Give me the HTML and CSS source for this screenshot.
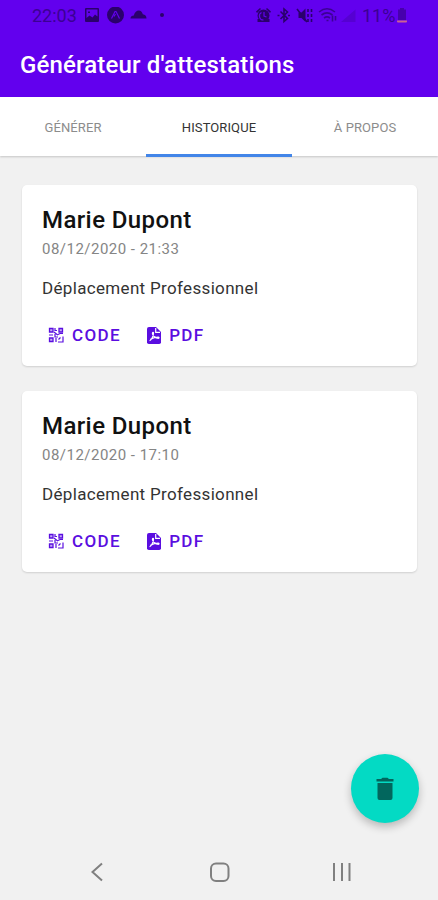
FILE: index.html
```html
<!DOCTYPE html>
<html lang="fr">
<head>
  <meta charset="UTF-8" />
  <meta name="viewport" content="width=device-width, initial-scale=1.0"/>
  <title>Générateur d'attestations</title>
  <link rel="stylesheet" href="styles.css">
</head>
<body>

<!-- Icônes partagées par les cartes -->
<svg class="sprite" width="0" height="0">
  <symbol id="icon-code" viewBox="0 0 16 16">
    <g fill="none" stroke="currentColor" stroke-width="1.3">
      <path fill="currentColor" fill-opacity="0.35" d="M1.500 1.500h3.500v3.500h-3.500zM11 1.500h3.500v3.500h-3.500zM1.500 11h3.500v3.500h-3.500z"/>
      <path stroke-width="1.2" d="M7 1v2.500h2M6 5l3 2.500M1 8h4M7 7v3h3M9 8l3-1.500h3M8 11v4M10 15h5V9.500M10.500 12.500l2-2"/>
    </g>
  </symbol>
  <symbol id="icon-pdf" viewBox="0 0 14 17">
    <path fill="currentColor" d="M2 0h7l5 5v10.2a1.8 1.8 0 0 1-1.8 1.8H1.8A1.8 1.8 0 0 1 0 15.2V2a2 2 0 0 1 2-2z"/>
    <path fill="none" stroke="#fff" stroke-width="1.2" d="M8.7 1v4.300H13M2.600 13.600c2-1 4-5 3.900-7.600 0-1-1.100-1-1.100.2 0 2.600 3.200 5.100 6 5.100 1 0 .8-1.100-.3-1.100-2.600 0-5.500 1-8 2.400"/>
  </symbol>
</svg>

<header class="app-bar">
  <div class="status-bar">
    <span class="clock">22:03</span>
    <svg class="status-left" width="82" height="18" viewBox="0 0 82 18">
      <path fill-rule="evenodd" d="M2 1h12a1 1 0 0 1 1 1v12a1 1 0 0 1-1 1H2a1 1 0 0 1-1-1V2a1 1 0 0 1 1-1zm.5 1.500v8.500L5.500 8.500l3 2L11 7.500l2.500 2v-7zM4 4.500h2v1.500H4z"/>
      <circle cx="31.500" cy="8" r="8.500"/>
      <path class="cut" d="M27.500 11.500l3.500-7h1l3.500 7M30 9.500l1.500-2.500"/>
      <path d="M46.500 11.500c0-2 1.500-3 3.300-3 .8-3.500 3-5 5-5s3.400 1.500 4 3.800c2.300.2 3.700 1.700 3.700 4.200z"/>
      <circle cx="78" cy="8" r="2"/>
    </svg>
    <svg class="status-right" width="102" height="18" viewBox="0 0 102 18">
      <path d="M0 4.500l4-3.500 1 1L1 6zM10 2l1-1 4 3.500L14 6z"/>
      <circle cx="7.500" cy="8.500" r="6"/>
      <path d="M1.500 12h12v3h-12z"/>
      <path class="cut" d="M8 5v4l2.500 1M5.500 5.500a4 4 0 0 0 2 7.500"/>
      <path class="line" d="M24.500 4.500l7 7-3.500 3V2l3.500 3-7 7M21.500 8.500h2M32 8.500h2"/>
      <path d="M42.500 5.500h3l4-4v13.500l-4-4h-3z"/>
      <path class="line" d="M41 2l10 13M52 2v3M52 7v3M52 12v3M55.500 2v3M55.500 7v3M55.500 12v3"/>
      <path class="thin" d="M63 5c5-4 11-4 16 0M65.500 8c4-3 7-3 11 0M68 11c2-1.500 4-1.500 6 0M70.500 13.500h2"/>
      <path class="thin" d="M76.500 8.500v6M79.500 13.500V9"/>
      <path class="faint" d="M85 15L99.500 2.500V15z"/>
    </svg>
    <span class="percent">11%</span>
    <svg class="battery" width="10" height="16" viewBox="0 0 10 16">
      <path fill="#4700ad" d="M3 0h4v1.500h2V12H1V1.500h2z"/>
      <path fill="#cb6191" d="M0 12.500h10v1a1 1 0 0 1-1 1H1a1 1 0 0 1-1-1z"/>
    </svg>
  </div>
  <h1>Générateur d'attestations</h1>
</header>

<nav class="tabs">
  <a class="tab">GÉNÉRER</a>
  <a class="tab active">HISTORIQUE</a>
  <a class="tab">À PROPOS</a>
</nav>

<main class="history">
  <article class="card">
    <h2>Marie Dupont</h2>
    <p class="date">08/12/2020 - 21:33</p>
    <p class="reason">Déplacement Professionnel</p>
    <div class="actions">
      <button class="action code"><svg width="16" height="16"><use href="#icon-code"/></svg><span>CODE</span></button>
      <button class="action"><svg width="14" height="17"><use href="#icon-pdf"/></svg><span>PDF</span></button>
    </div>
  </article>

  <article class="card">
    <h2>Marie Dupont</h2>
    <p class="date">08/12/2020 - 17:10</p>
    <p class="reason">Déplacement Professionnel</p>
    <div class="actions">
      <button class="action code"><svg width="16" height="16"><use href="#icon-code"/></svg><span>CODE</span></button>
      <button class="action"><svg width="14" height="17"><use href="#icon-pdf"/></svg><span>PDF</span></button>
    </div>
  </article>
</main>

<button class="fab" aria-label="Supprimer">
  <svg width="18" height="24" viewBox="0 0 18 24">
    <path d="M0.500 2H5l1.500-1.200h5L13 2h4.500v2.500H.5zM1.500 6h15v15a2 2 0 0 1-2 2h-11a2 2 0 0 1-2-2z"/>
  </svg>
</button>

<footer class="nav-bar">
  <svg viewBox="0 0 24 24"><path d="M17 3.500L7.500 12l9.500 8.500"/></svg>
  <svg viewBox="0 0 24 24"><rect x="3" y="3.500" width="17.500" height="17.500" rx="5"/></svg>
  <svg viewBox="0 0 24 24"><path d="M4 3v18M12 3v18M19.500 3v18"/></svg>
</footer>

</body>
</html>
```

FILE: styles.css
```css
* {
  box-sizing: border-box;
}
body {
  margin: 0;
  height: 900px;
  display: flex;
  flex-direction: column;
  font-family: Roboto, sans-serif;
  background: #f1f1f1;
  overflow: hidden;
}
h1, h2, p {
  margin: 0;
}
button {
  border: 0;
  padding: 0;
  background: none;
  font-family: inherit;
}
.sprite {
  position: absolute;
}

/* Barre d'application */
.app-bar {
  height: 97px;
  background: #6200ee;
}
.status-bar {
  display: flex;
  align-items: center;
  height: 31px;
  padding-left: 32px;
  color: #3c0094;
  font-size: 18px;
}
.status-bar svg {
  fill: #2b006c;
  flex: none;
}
.status-bar .cut {
  fill: none;
  stroke: #6200ee;
  stroke-width: 1.2;
}
.status-bar .line {
  fill: none;
  stroke: #2b006c;
  stroke-width: 1.6;
}
.status-bar .thin {
  fill: none;
  stroke: #3c0094;
  stroke-width: 1.6;
}
.status-bar .faint {
  fill: #5600d2;
}
.clock {
  width: 52px;
}
.status-right {
  margin-left: 90px;
}
.percent {
  width: 35px;
  margin-left: 4px;
}
h1 {
  padding: 19px 20px 0;
  font-size: 24px;
  line-height: 31px;
  font-weight: 500;
  letter-spacing: 0.16px;
  color: #fff;
  white-space: nowrap;
}

/* Onglets */
.tabs {
  display: flex;
  height: 59px;
  background: #fff;
  box-shadow: 0 1px 2px rgba(0,0,0,0.18);
}
.tab {
  flex: 1;
  height: 60px;
  line-height: 61px;
  text-align: center;
  font-size: 13px;
  letter-spacing: 0.1px;
  color: #8c8c8c;
}
.tab.active {
  color: #333;
  border-bottom: 3px solid #4285e8;
}

/* Cartes */
.history {
  flex: 1;
  display: flex;
  flex-direction: column;
  gap: 25px;
  padding: 29px 21px 0 22px;
}
.card {
  height: 181px;
  padding: 19px 20px 0;
  background: #fff;
  border-radius: 5px;
  box-shadow: 0 1px 2px rgba(0,0,0,0.14);
}
.card h2 {
  font-size: 24px;
  line-height: 32px;
  font-weight: 500;
  letter-spacing: 0.4px;
  color: #111;
}
.date {
  margin-top: 3px;
  font-size: 15px;
  line-height: 21px;
  letter-spacing: 0.48px;
  color: #858585;
}
.reason {
  margin-top: 18px;
  font-size: 17px;
  line-height: 21px;
  letter-spacing: 0.33px;
  color: #333;
}
.actions {
  display: flex;
  gap: 26px;
  margin-top: 26px;
  padding-left: 6px;
}
.action {
  display: flex;
  align-items: center;
  gap: 8px;
  height: 20px;
  font-size: 17px;
  font-weight: 500;
  letter-spacing: 1.4px;
  color: #5a0ee0;
}

/* Bouton flottant */
.fab {
  position: absolute;
  right: 19px;
  bottom: 77px;
  display: flex;
  align-items: center;
  justify-content: center;
  width: 68px;
  height: 69px;
  border-radius: 50%;
  background: #03dac4;
  box-shadow: 0 4px 8px rgba(0,0,0,0.24);
}
.fab svg {
  fill: #02665d;
}

/* Navigation du téléphone */
.nav-bar {
  display: flex;
  justify-content: space-between;
  align-items: center;
  height: 56px;
  padding: 0 84px 0 85px;
}
.nav-bar svg {
  width: 24px;
  height: 24px;
  fill: none;
  stroke: #808080;
  stroke-width: 2;
}
```
